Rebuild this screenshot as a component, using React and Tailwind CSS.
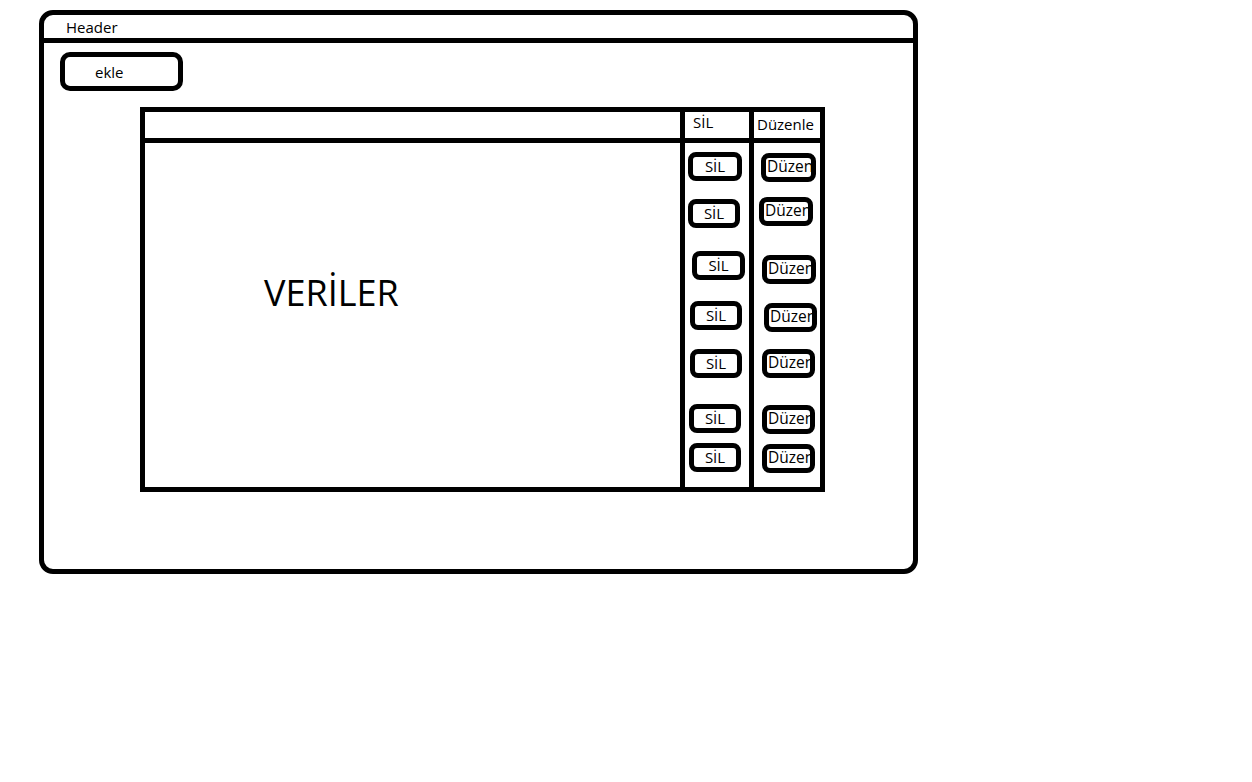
const silButtons = [
  'mt-[9px] ml-[3px] w-[54px]',
  'mt-[18px] ml-[3px] w-[52px]',
  'mt-[23px] ml-[7px] w-[53px]',
  'mt-[21px] ml-[5px] w-[52px]',
  'mt-[19px] ml-[5px] w-[52px]',
  'mt-[26px] ml-[4px] w-[52px]',
  'mt-[10px] ml-[4px] w-[52px]',
];

const duzenButtons = [
  'mt-[10px] ml-[7px] w-[55px]',
  'mt-[15px] ml-[5px] w-[54px]',
  'mt-[29px] ml-[8px] w-[54px]',
  'mt-[19px] ml-[10px] w-[53px]',
  'mt-[17px] ml-[8px] w-[53px]',
  'mt-[27px] ml-[8px] w-[53px]',
  'mt-[10px] ml-[8px] w-[53px]',
];

function App() {
  return (
    <div className="min-h-screen w-full bg-white pl-[39px] pt-[10px] font-['Open_Sans','Liberation_Sans',sans-serif] text-[15px] text-black">
      {/* dış çerçeve */}
      <div className="flex h-[564px] w-[879px] flex-col rounded-[14px] border-[5px] border-black">
        <div className="flex h-[28px] items-center border-b-[5px] border-black pl-[22px] leading-[20px]">
          Header
        </div>

        <div className="flex flex-col">
          <button className="ml-[16px] mt-[9px] flex h-[39px] w-[123px] items-center rounded-[10px] border-[5px] border-black pl-[30px] pt-[1px] leading-[20px]">
            ekle
          </button>

          {/* tablo */}
          <div className="ml-[96px] mt-[16px] flex h-[385px] w-[685px] border-[5px] border-black">
            <div className="flex w-[535px] flex-col">
              <div className="h-[31px] border-b-[5px] border-black" />
              <div className="pl-[119px] pt-[132px] text-[36px] leading-[36px]">VERİLER</div>
            </div>

            <div className="flex w-[69px] flex-col border-l-[5px] border-black">
              <div className="h-[31px] border-b-[5px] border-black pl-[8px] leading-[20px]">SİL</div>
              <div className="flex flex-col">
                {silButtons.map((cls, i) => (
                  <button
                    key={i}
                    className={`${cls} flex h-[29px] items-center justify-center rounded-[8px] border-[5px] border-black pb-[2px] leading-[18px]`}
                  >
                    SİL
                  </button>
                ))}
              </div>
            </div>

            <div className="flex w-[71px] flex-col border-l-[5px] border-black">
              <div className="h-[31px] border-b-[5px] border-black pl-[3px] pt-[2px] leading-[20px]">Düzenle</div>
              <div className="flex flex-col">
                {duzenButtons.map((cls, i) => (
                  <button
                    key={i}
                    className={`${cls} flex h-[29px] items-center overflow-hidden whitespace-nowrap rounded-[8px] border-[5px] border-black pb-[3px] pl-[1px] text-[15.5px] leading-[18px]`}
                  >
                    Düzen
                  </button>
                ))}
              </div>
            </div>
          </div>
        </div>
      </div>
    </div>
  );
}

export default App;
